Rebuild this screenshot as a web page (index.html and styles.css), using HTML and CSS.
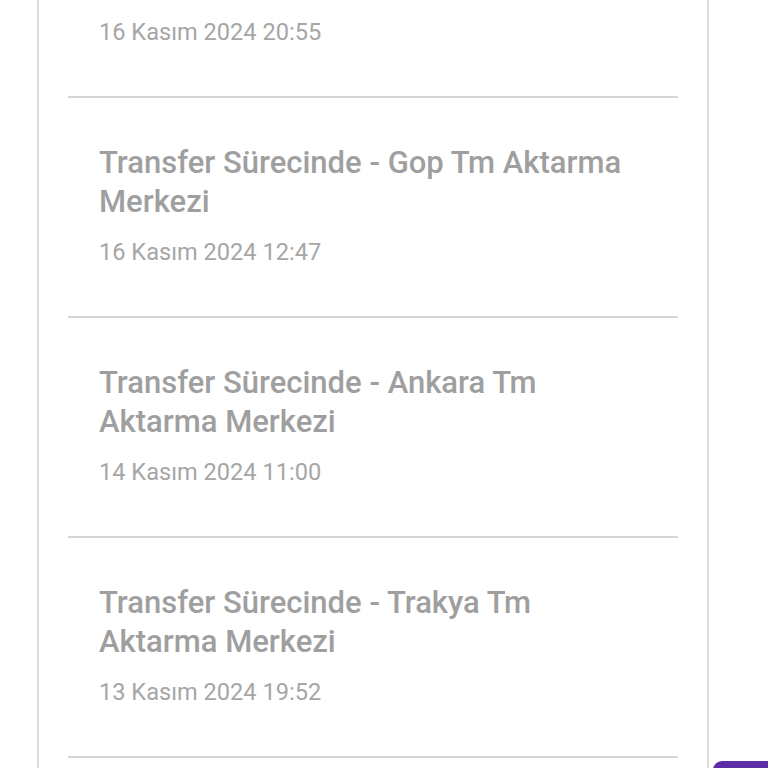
FILE: index.html
```html
<!doctype html>
<html lang="tr">
<head>
    <meta charset="UTF-8">
    <meta name="viewport" content="width=device-width, initial-scale=1.0">
    <title>Gönderi Hareketleri</title>
    <link rel="stylesheet" href="styles.css">
</head>
<body>
    <div class="page">
        <div class="card">
            <div class="move move-tail">
                <div class="move-date">16 Kasım 2024 20:55</div>
            </div>
            <div class="move">
                <div class="move-title">Transfer Sürecinde - Gop Tm Aktarma Merkezi</div>
                <div class="move-date">16 Kasım 2024 12:47</div>
            </div>
            <div class="move">
                <div class="move-title">Transfer Sürecinde - Ankara Tm Aktarma Merkezi</div>
                <div class="move-date">14 Kasım 2024 11:00</div>
            </div>
            <div class="move">
                <div class="move-title">Transfer Sürecinde - Trakya Tm Aktarma Merkezi</div>
                <div class="move-date">13 Kasım 2024 19:52</div>
            </div>
        </div>
    </div>
    <div class="fab"></div>
</body>
</html>
```

FILE: styles.css
```css
* {
    margin: 0;
    padding: 0;
    box-sizing: border-box;
}
html, body {
    height: 100%;
    overflow: hidden;
}
body {
    background-color: #fff;
    font-family: Roboto, "Noto Sans", "Liberation Sans", sans-serif;
}
.page {
    padding-left: 37px;
}
.card {
    width: 672px;
    min-height: 768px;
    border-left: 2px solid #dcdcdc;
    border-right: 2px solid #dcdcdc;
    padding: 0 29px;
}
.move {
    padding: 45px 30px 49px 31px;
    border-bottom: 2px solid #d6d6d6;
}
.move-tail {
    padding-top: 17px;
}
.move-title {
    max-width: 548px;
    font-size: 31px;
    font-weight: 500;
    line-height: 39px;
    color: #9f9f9f;
}
.move-date {
    margin-top: 16px;
    font-size: 23.6px;
    line-height: 30px;
    color: #a6a6a6;
}
.move-tail .move-date {
    margin-top: 0;
}
.fab {
    position: absolute;
    left: 713px;
    top: 761px;
    width: 80px;
    height: 60px;
    border-radius: 9px;
    background-color: #5b2ea6;
}
```
